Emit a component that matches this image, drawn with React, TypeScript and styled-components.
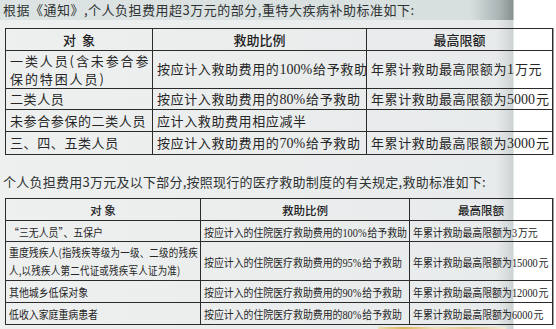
import styled, { createGlobalStyle } from 'styled-components';

const GlobalStyle = createGlobalStyle`
  html, body {
    margin: 0;
    padding: 0;
    background: #fff;
  }
`;

const Page = styled.div`
  width: 556px;
  height: 329px;
  overflow: hidden;
  display: flex;
  flex-direction: column;
  background: linear-gradient(
    to right,
    #eef0f0 0,
    #e8ebeb 496px,
    #cdd3d3 513px,
    #ffffff 514px
  );
  font-family: 'Noto Sans CJK SC', sans-serif;
  color: #2a2a2a;
`;

const Title = styled.div<{ $strip?: boolean }>`
  height: 20px;
  line-height: 20px;
  padding-left: 3px;
  font-size: 13px;
  letter-spacing: ${(p) => (p.$strip ? '0.5px' : '0.25px')};
  color: #2f3333;
  white-space: nowrap;
  margin-top: ${(p) => (p.$strip ? '0' : '17px')};
  margin-bottom: ${(p) => (p.$strip ? '8px' : '6px')};
  background: ${(p) =>
    p.$strip
      ? 'linear-gradient(to right, #dde3e3 0, #d8dfdf 470px, #a9b3b3 500px, #86918f 513px, #fff 514px)'
      : 'transparent'};
`;

const Table = styled.table`
  border-collapse: collapse;
  margin-left: 5px;
  width: 548px;
  table-layout: fixed;
  box-shadow: 1px 0 0 #9aa0a0;
`;

const Head = styled.th<{ $h: number; $small?: boolean }>`
  height: ${(p) => p.$h}px;
  padding: 0;
  border: 1px solid #2b2b2b;
  font-weight: 500;
  font-size: ${(p) => (p.$small ? '11.5px' : '13px')};
  line-height: 14px;
  text-align: center;
  vertical-align: middle;
  color: #222;
`;

const Cell1 = styled.td<{ $h: number; $narrow?: boolean }>`
  height: ${(p) => p.$h}px;
  padding: 0 0 0 4px;
  border: 1px solid #2b2b2b;
  font-family: 'Noto Sans CJK SC', sans-serif;
  font-size: 13px;
  letter-spacing: ${(p) => (p.$narrow ? '1.9px' : '0.6px')};
  line-height: ${(p) => (p.$narrow ? '18px' : '14px')};
  white-space: nowrap;
  vertical-align: middle;
  color: #262626;
  overflow: hidden;
`;

const Cell2 = styled.td<{ $h: number; $two?: boolean }>`
  height: ${(p) => p.$h}px;
  padding: 0 0 0 3px;
  border: 1px solid #2b2b2b;
  font-family: 'Noto Sans CJK SC', sans-serif;
  font-size: 11.5px;
  line-height: ${(p) => (p.$two ? '18px' : '14px')};
  white-space: nowrap;
  vertical-align: middle;
  color: #262626;
  overflow: hidden;
`;

const Condensed = styled.span`
  display: inline-block;
  vertical-align: middle;
  transform: scaleX(0.86);
  transform-origin: left center;
`;

const Num = styled.span<{ $size?: number }>`
  font-family: 'Liberation Serif', serif;
  font-size: ${(p) => p.$size ?? 14}px;
  line-height: 1;
  letter-spacing: 0;
  margin-right: 1px;
`;

const Note = styled.span`
  font-size: 11px;
  letter-spacing: 0.3px;
`;

const Photo = styled.div`
  margin: 2px 0 0 378px;
  width: 128px;
  height: 6px;
  background: linear-gradient(to right, #e9dcae, #d7b75c 20%, #efe2b9 45%, #e0c990 70%, #f3ecd6);
`;

const rows1 = [
  {
    who: (
      <>
        一类人员(含未参合参
        <br />
        保的特困人员)
      </>
    ),
    rate: <>按应计入救助费用的<Num>100%</Num>给予救助</>,
    max: <>年累计救助最高限额为<Num>1</Num>万元</>,
    h: 37,
    narrow: true,
  },
  { who: '二类人员', rate: <>按应计入救助费用的<Num>80%</Num>给予救助</>, max: <>年累计救助最高限额为<Num>5000</Num>元</>, h: 20 },
  { who: '未参合参保的二类人员', rate: '应计入救助费用相应减半', max: '', h: 21 },
  { who: '三、四、五类人员', rate: <>按应计入救助费用的<Num>70%</Num>给予救助</>, max: <>年累计救助最高限额为<Num>3000</Num>元</>, h: 22 },
];

const rows2 = [
  {
    who: '“三无人员”、五保户',
    rate: <>按应计入的住院医疗救助费用的<Num $size={12}>100%</Num>给予救助</>,
    max: <>年累计救助最高限额为<Num $size={12}>3</Num>万元</>,
    h: 20,
  },
  {
    who: (
      <>
        重度残疾人<Note>(指残疾等级为一级、二级的残疾</Note>
        <br />
        <Note>人,以残疾人第二代证或残疾军人证为准)</Note>
      </>
    ),
    rate: <>按应计入的住院医疗救助费用的<Num $size={12}>95%</Num>给予救助</>,
    max: <>年累计救助最高限额为<Num $size={12}>15000</Num>元</>,
    h: 38,
    two: true,
  },
  {
    who: '其他城乡低保对象',
    rate: <>按应计入的住院医疗救助费用的<Num $size={12}>90%</Num>给予救助</>,
    max: <>年累计救助最高限额为<Num $size={12}>12000</Num>元</>,
    h: 21,
  },
  {
    who: '低收入家庭重病患者',
    rate: <>按应计入的住院医疗救助费用的<Num $size={12}>80%</Num>给予救助</>,
    max: <>年累计救助最高限额为<Num $size={12}>6000</Num>元</>,
    h: 21,
  },
];

export default function App() {
  return (
    <Page>
      <GlobalStyle />
      <Title $strip>根据《通知》,个人负担费用超3万元的部分,重特大疾病补助标准如下:</Title>
      <Table>
        <colgroup>
          <col style={{ width: 147 }} />
          <col style={{ width: 214 }} />
          <col />
        </colgroup>
        <thead>
          <tr>
            <Head $h={21}>对&nbsp;&nbsp;象</Head>
            <Head $h={21}>救助比例</Head>
            <Head $h={21}>最高限额</Head>
          </tr>
        </thead>
        <tbody>
          {rows1.map((r, i) => (
            <tr key={i}>
              <Cell1 $h={r.h} $narrow={r.narrow}>{r.who}</Cell1>
              <Cell1 $h={r.h}>{r.rate}</Cell1>
              <Cell1 $h={r.h}>{r.max}</Cell1>
            </tr>
          ))}
        </tbody>
      </Table>
      <Title>个人负担费用3万元及以下部分,按照现行的医疗救助制度的有关规定,救助标准如下:</Title>
      <Table>
        <colgroup>
          <col style={{ width: 195 }} />
          <col style={{ width: 209 }} />
          <col />
        </colgroup>
        <thead>
          <tr>
            <Head $h={21} $small>对&nbsp;象</Head>
            <Head $h={21} $small>救助比例</Head>
            <Head $h={21} $small>最高限额</Head>
          </tr>
        </thead>
        <tbody>
          {rows2.map((r, i) => (
            <tr key={i}>
              <Cell2 $h={r.h} $two={r.two}><Condensed>{r.who}</Condensed></Cell2>
              <Cell2 $h={r.h}><Condensed>{r.rate}</Condensed></Cell2>
              <Cell2 $h={r.h}><Condensed>{r.max}</Condensed></Cell2>
            </tr>
          ))}
        </tbody>
      </Table>
      <Photo />
    </Page>
  );
}
